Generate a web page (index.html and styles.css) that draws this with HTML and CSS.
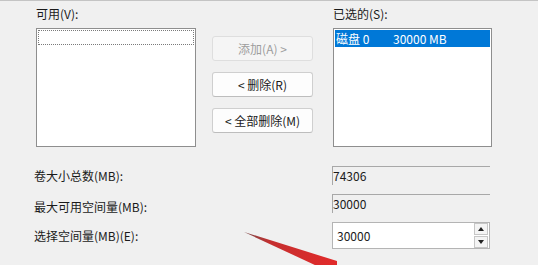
FILE: index.html
```html
<!DOCTYPE html>
<html lang="zh-CN">
<head>
<meta charset="utf-8">
<link rel="stylesheet" href="styles.css">
</head>
<body>
<div class="dialog">
  <div class="top">
    <div class="col">
      <div class="label">可用(V):</div>
      <div class="listbox"><div class="focus-row"></div></div>
    </div>
    <div class="buttons">
      <button class="btn" disabled>添加(A) &gt;</button>
      <button class="btn">&lt; 删除(R)</button>
      <button class="btn">&lt; 全部删除(M)</button>
    </div>
    <div class="col">
      <div class="label">已选的(S):</div>
      <div class="listbox"><div class="sel-row"><span class="disk">磁盘 0</span><span>30000 MB</span></div></div>
    </div>
  </div>
  <div class="fields">
    <div class="flabel r1">卷大小总数(MB):</div>
    <div class="ro r1">74306</div>
    <div class="flabel r2">最大可用空间量(MB):</div>
    <div class="ro r2">30000</div>
    <div class="flabel r3">选择空间量(MB)(E):</div>
    <div class="spin r3">
      <span class="spin-val">30000</span>
      <span class="spin-btns">
        <span class="sb"><span class="tri up"></span></span>
        <span class="sb"><span class="tri down"></span></span>
      </span>
    </div>
  </div>
</div>
<svg class="arrow" width="538" height="265" viewBox="0 0 538 265">
  <defs>
    <linearGradient id="g" x1="244" y1="232" x2="330" y2="265" gradientUnits="userSpaceOnUse">
      <stop offset="0" stop-color="#7a4a4a"/>
      <stop offset="0.3" stop-color="#c43030"/>
      <stop offset="1" stop-color="#e02a2a"/>
    </linearGradient>
  </defs>
  <polygon points="244,232 337,261 337,266 317,266" fill="url(#g)"/>
</svg>
</body>
</html>
```
FILE: styles.css
```css
* { box-sizing: border-box; }
html, body { margin: 0; padding: 0; }
body {
  width: 538px;
  height: 265px;
  overflow: hidden;
  background: #f0f0f0;
  border-top: 1px solid #c4c4c4;
  font-family: "Noto Sans CJK SC", "Microsoft YaHei", sans-serif;
  font-size: 12px;
  color: #1a1a1a;
  position: relative;
}
.dialog {
  padding: 5px 0 0 36px;
}
.top {
  display: flex;
}
.col {
  display: flex;
  flex-direction: column;
}
.col:last-child { margin-left: 20px; }
.label {
  height: 22px;
  line-height: 16px;
}
.listbox {
  width: 160px;
  height: 119px;
  background: #fff;
  border: 1px solid #8e8e8e;
  padding: 1px;
}
.col:last-child .listbox { width: 159px; }
.focus-row {
  height: 15px;
  border: 1px dotted #7a7a7a;
}
.sel-row {
  height: 17px;
  background: #0078d7;
  color: #fff;
  display: flex;
  align-items: center;
  padding-left: 1px;
  line-height: 17px;
}
.disk { width: 57px; }
.buttons {
  display: flex;
  flex-direction: column;
  gap: 11px;
  margin-left: 16px;
  padding-top: 30px;
  width: 101px;
}
.btn {
  height: 25px;
  font: inherit;
  color: #1a1a1a;
  background: #fdfdfd;
  border: 1px solid #cfcfcf;
  border-bottom-color: #bdbdbd;
  border-radius: 3px;
  padding: 0;
}
.btn:disabled {
  background: #f5f5f5;
  color: #9d9d9d;
  border-color: #dedede;
}
.fields {
  display: grid;
  grid-template-columns: 298px 158px;
  grid-template-rows: 19px 19px 27px;
  row-gap: 9px;
  margin-top: 19px;
  margin-left: -2px;
}
.flabel {
  display: flex;
  align-items: center;
}
.r2.flabel { padding-top: 5px; }
.ro {
  border-top: 1px solid #a8a8a8;
  border-left: 1px solid #a8a8a8;
  line-height: 17px;
  padding-left: 0;
}
.spin {
  background: #fff;
  border: 1px solid #b4b4b4;
  display: flex;
  align-items: center;
  justify-content: space-between;
  padding-left: 4px;
}
.spin-btns {
  display: flex;
  flex-direction: column;
  gap: 1px;
  margin-right: 1px;
}
.sb {
  width: 14px;
  height: 12px;
  background: #f4f4f4;
  border: 1px solid #c6c6c6;
  display: flex;
  align-items: center;
  justify-content: center;
}
.tri {
  width: 0;
  height: 0;
  border-left: 3px solid transparent;
  border-right: 3px solid transparent;
}
.tri.up { border-bottom: 4px solid #222; }
.tri.down { border-top: 4px solid #222; }
.arrow {
  position: absolute;
  left: 0;
  top: -1px;
  pointer-events: none;
}
```
